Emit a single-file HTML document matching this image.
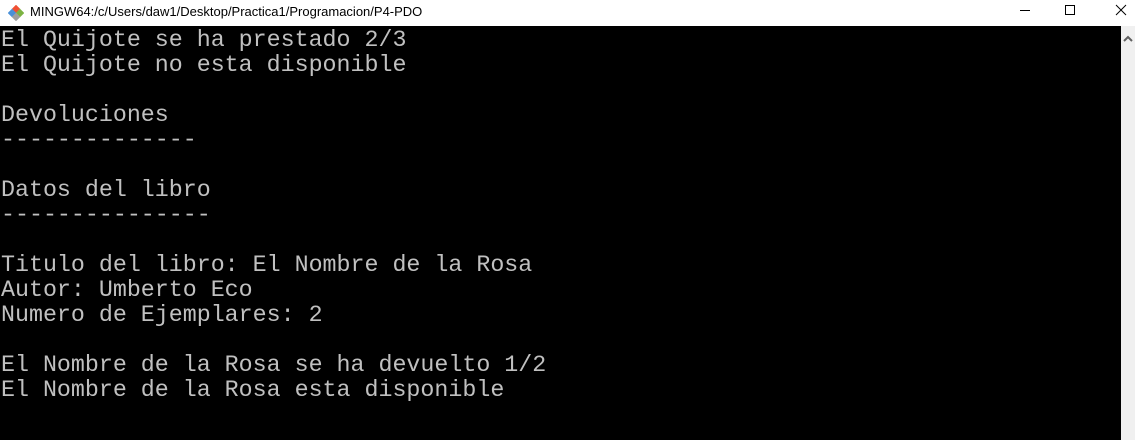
<!DOCTYPE html>
<html><head><style>
body{margin:0;width:1135px;height:440px;overflow:hidden;background:#000;position:relative;}
.tb{position:absolute;left:0;top:0;width:1135px;height:26px;background:#fff;}
.tt{position:absolute;left:30px;top:4px;font:13px "Liberation Sans",sans-serif;color:#000;}
.term{position:absolute;left:0;top:26px;width:1121px;height:414px;background:#000;}
.sb{position:absolute;left:1121px;top:26px;width:14px;height:414px;background:#f0f0f0;}
pre{margin:0;position:absolute;left:1px;top:28px;font:23.3px/25px "Liberation Mono",monospace;color:#c0c0c0;}
</style></head><body>
<div class="tb">
<svg style="position:absolute;left:8px;top:5px" width="16" height="16" viewBox="0 0 16 16">
<rect x="5" y="1" width="6" height="6" transform="rotate(45 8 4)" fill="#f05033"/>
<rect x="1" y="5" width="6" height="6" transform="rotate(45 4 8)" fill="#4a90d9"/>
<rect x="9" y="5" width="6" height="6" transform="rotate(45 12 8)" fill="#7cb342"/>
<rect x="5" y="9" width="6" height="6" transform="rotate(45 8 12)" fill="#9e9e9e"/>
</svg>
<div class="tt">MINGW64:/c/Users/daw1/Desktop/Practica1/Programacion/P4-PDO</div>
<svg style="position:absolute;left:1010px;top:0" width="125" height="26">
<line x1="10" y1="10.5" x2="20" y2="10.5" stroke="#000"/>
<rect x="55.5" y="5.5" width="9" height="9" fill="none" stroke="#000"/>
<line x1="106" y1="5" x2="116" y2="15" stroke="#000"/><line x1="116" y1="5" x2="106" y2="15" stroke="#000"/>
</svg>
</div>
<div class="term"></div>
<div class="sb"><svg width="14" height="14" style="position:absolute;top:6px"><path d="M3 9 L7 5 L11 9" stroke="#606060" stroke-width="2" fill="none"/></svg></div>
<pre>El Quijote se ha prestado 2/3
El Quijote no esta disponible

Devoluciones
--------------

Datos del libro
---------------

Titulo del libro: El Nombre de la Rosa
Autor: Umberto Eco
Numero de Ejemplares: 2

El Nombre de la Rosa se ha devuelto 1/2
El Nombre de la Rosa esta disponible</pre>
</body></html>
